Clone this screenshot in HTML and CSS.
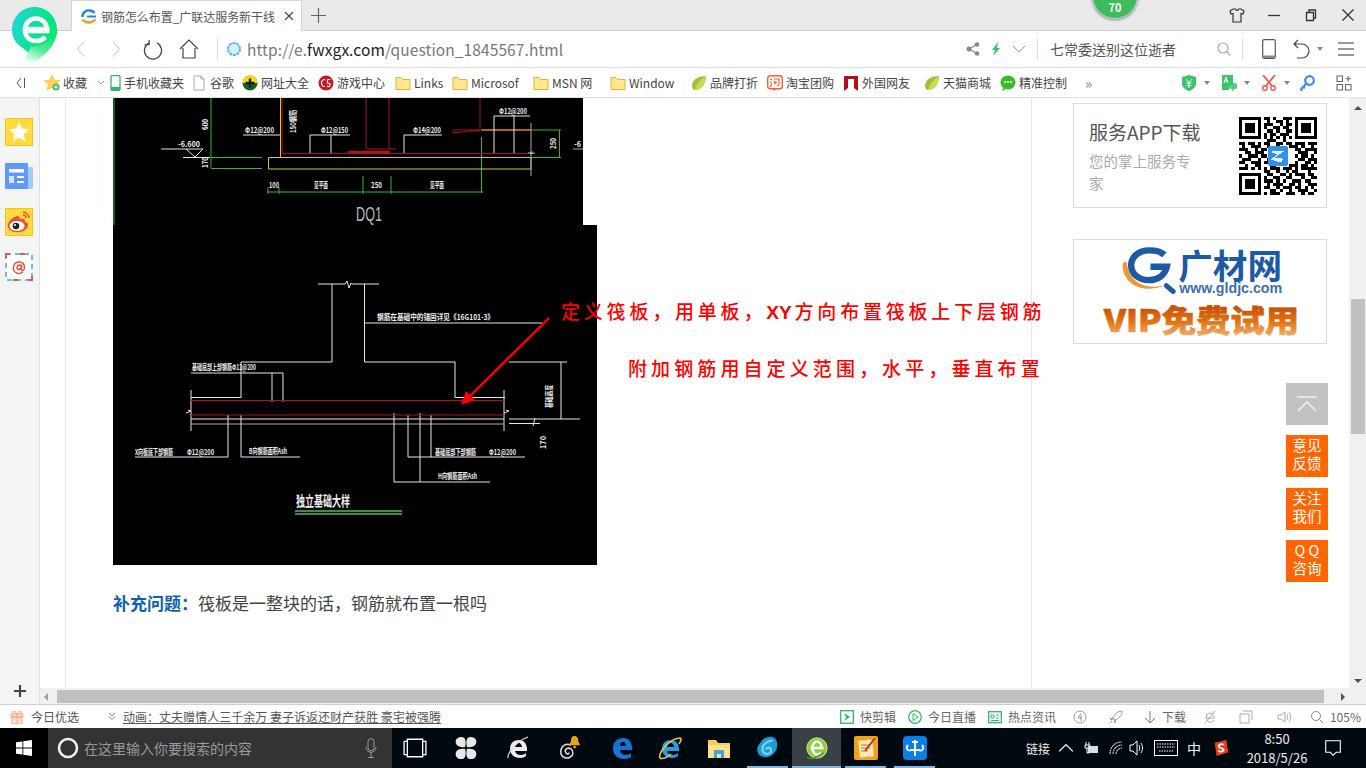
FILE: index.html
```html
<!DOCTYPE html>
<html lang="zh-CN">
<head>
<meta charset="utf-8">
<title>钢筋怎么布置_广联达服务新干线</title>
<link rel="stylesheet" href="styles.css">
</head>
<body>
<div class="browser">

  <!-- tab strip -->
  <header class="tabbar">
    <div class="tab">
      <svg class="ic16" viewBox="0 0 16 16"><path d="M1.500 9C1 4 6 2 9 2.500c2 .3 3.500 1 4.500 2.500" fill="none" stroke="#1c86d8" stroke-width="2.400"/><path d="M1.500 11.500c3 4 9 4 13 0" fill="none" stroke="#f39a1e" stroke-width="2.400"/><path d="M6 8.500h9" stroke="#1c86d8" stroke-width="2"/></svg>
      <span class="tab-title">钢筋怎么布置_广联达服务新干线</span>
      <svg class="tab-x" viewBox="0 0 10 10"><path d="M1 1l8 8M9 1L1 9" stroke="#444" stroke-width="1.200"/></svg>
    </div>
    <svg class="tab-plus" viewBox="0 0 15 15"><path d="M7.500 0v15M0 7.500h15" stroke="#666" stroke-width="1.200"/></svg>
    <div class="ball">70</div>
    <div class="winctl">
      <svg class="ic16" viewBox="0 0 16 16"><path d="M4 2h2.500c.5 2 2.500 2 3 0H12l3 2-1 3-2-.5V15H4V6.500L2 7 1 4z" fill="none" stroke="#333" stroke-width="1.200"/></svg>
      <svg class="ic16" viewBox="0 0 16 16"><path d="M2 8.500h12" stroke="#333" stroke-width="1.300"/></svg>
      <svg class="ic16" viewBox="0 0 16 16"><path d="M3.500 5.500h7v8h-7zM6 5V3h6.500v8H11" fill="none" stroke="#333" stroke-width="1.300"/></svg>
      <svg class="ic16" viewBox="0 0 16 16"><path d="M2.500 2.500l11 11M13.500 2.500l-11 11" stroke="#333" stroke-width="1.300"/></svg>
    </div>
  </header>

  <!-- browser logo, hangs over the tab strip and address bar -->
  <svg class="logo" viewBox="0 0 46 56">
    <defs>
      <linearGradient id="lg" x1="0" y1=".2" x2="1" y2=".6"><stop offset="0" stop-color="#25d6dd"/><stop offset=".5" stop-color="#0fdf9c"/><stop offset="1" stop-color="#00e96a"/></linearGradient>
      <linearGradient id="lg2" x1=".7" y1="0" x2=".2" y2="1"><stop offset="0" stop-color="#00e96a"/><stop offset=".55" stop-color="#4bee94"/><stop offset="1" stop-color="#ffffff"/></linearGradient>
      <linearGradient id="lgbar" x1="0" y1="0" x2="1" y2="0"><stop offset="0" stop-color="#e6fff7"/><stop offset=".6" stop-color="#ffffff"/></linearGradient>
    </defs>
    <path d="M22.500 0C10 0 0 10 0 22.500c0 8 4 14 10 18l7 5.500 6-2C36 44 45 34.500 45 22.500 45 10 35 0 22.500 0z" fill="url(#lg)"/>
    <path d="M45 22.500C45 38 33 49 20 56H9.500c4-6 7-12 10-16.500 10 0 20-6 25.500-17z" fill="url(#lg2)"/>
    <path d="M13 23c0-7 5-11.500 11-11.500S35 16 35 23M13 23c0 7 5 11 11 11 4 0 7-1.500 9.500-4" fill="none" stroke="#fff" stroke-width="4.600"/>
    <path d="M12 19.800h25.500v6.500H12z" fill="url(#lgbar)"/>
  </svg>

  <!-- address bar -->
  <nav class="addrbar">
    <div class="nav-left">
      <svg class="nav-ic w-back" viewBox="0 0 12 20"><path d="M10 1L2 10l8 9" fill="none" stroke="#ccc" stroke-width="1.300"/></svg>
      <svg class="nav-ic w-fwd" viewBox="0 0 12 20"><path d="M2 1l8 9-8 9" fill="none" stroke="#ccc" stroke-width="1.300"/></svg>
      <svg class="nav-ic w-ref" viewBox="0 0 20 22"><path d="M6 4a9 9 0 1 0 8 0M6 1v5H1" fill="none" stroke="#444" stroke-width="1.200"/></svg>
      <svg class="nav-ic w-home" viewBox="0 0 20 20"><path d="M1 10l9-9 9 9M4 9v10h12V9" fill="none" stroke="#444" stroke-width="1.200"/></svg>
    </div>
    <div class="url">
      <svg class="ic16" viewBox="0 0 16 16"><circle cx="8" cy="8" r="6" fill="#d5f0ff" stroke="#54b8ee" stroke-width="2" stroke-dasharray="3 .7"/></svg>
      <span class="url-text">http://e.<b>fwxgx.com</b>/question_1845567.html</span>
    </div>
    <div class="addr-actions">
      <svg class="ic14" viewBox="0 0 14 14"><path d="M3 7l8-4.500M3 7l8 4.500" stroke="#888" stroke-width="1.200"/><circle cx="3" cy="7" r="2.500" fill="#888"/><circle cx="11" cy="2.500" r="2.300" fill="#888"/><circle cx="11" cy="11.500" r="2.300" fill="#888"/></svg>
      <svg class="ic14" viewBox="0 0 14 14"><path d="M9 0L3 8h3l-2 6 7-8H8z" fill="#36c569"/></svg>
      <svg class="ic14" viewBox="0 0 14 14"><path d="M1 4l6 6 6-6" fill="none" stroke="#999" stroke-width="1"/></svg>
    </div>
    <div class="searchbox">
      <span class="search-text">七常委送别这位逝者</span>
      <svg class="ic14" viewBox="0 0 14 14"><circle cx="6" cy="6" r="5" fill="none" stroke="#aaa" stroke-width="1.200"/><path d="M10 10l3.500 3.500" stroke="#aaa" stroke-width="1.300"/></svg>
    </div>
    <div class="addr-tools">
      <svg class="tool-phone" viewBox="0 0 14 20"><rect x=".7" y=".7" width="12.600" height="18.600" rx="1.500" fill="none" stroke="#555" stroke-width="1.200"/><path d="M1 16.500h12v2.500H1z" fill="#888"/></svg>
      <svg class="tool-undo" viewBox="0 0 18 20"><path d="M5 1L1 5l4 4M1 5h8a6.500 6.500 0 0 1 0 14H4" fill="none" stroke="#444" stroke-width="1.200"/></svg>
      <span class="caret caret-g"></span>
      <svg class="tool-menu" viewBox="0 0 16 14"><path d="M0 1h16M0 7h16M0 13h16" stroke="#333" stroke-width="1.200"/></svg>
    </div>
  </nav>

  <!-- bookmarks -->
  <nav class="bookmarks">
    <svg class="bm-collapse" viewBox="0 0 10 12"><path d="M5 1L1 6l4 5" fill="none" stroke="#555"/><path d="M8.500 1v10" stroke="#555"/></svg>
    <div class="bm-list">
      <a class="bm"><svg class="ic16" viewBox="0 0 16 16"><path d="M8 0l2.300 5.200 5.500.6-4.100 3.700 1.200 5.500L8 12.200 3.100 15 4.300 9.500.2 5.800l5.500-.6z" fill="#ffd64d" stroke="#e8b93a" stroke-width=".6"/><circle cx="12" cy="12" r="3.500" fill="#4cb86a"/><path d="M12 10v4M10 12h4" stroke="#fff"/></svg>收藏<svg class="bm-chev" viewBox="0 0 8 6"><path d="M1 1l3 3 3-3" fill="none" stroke="#999"/></svg></a>
      <a class="bm bm-tight"><svg class="ic16" viewBox="0 0 16 16"><rect x="3" y=".7" width="9" height="14.600" rx="1" fill="none" stroke="#34b560" stroke-width="1.300"/><path d="M3 12h9v3H3z" fill="#34b560"/></svg>手机收藏夹</a>
      <a class="bm"><svg class="ic16" viewBox="0 0 16 16"><path d="M3 1h7l3 3v11H3z" fill="#fff" stroke="#aaa"/><path d="M10 1v3h3" fill="#ddd" stroke="#aaa"/></svg>谷歌</a>
      <a class="bm"><svg class="ic16" viewBox="0 0 16 16"><circle cx="8" cy="8" r="7.500" fill="#1d5c22"/><path d="M8 .5a7.500 7.500 0 0 1 7.500 7.500H.5A7.500 7.500 0 0 1 8 .5" fill="#ffd800"/><path d="M8 3.500v9M3.500 8h9" stroke="#123" stroke-width="2.400"/></svg>网址大全</a>
      <a class="bm"><svg class="ic16" viewBox="0 0 16 16"><circle cx="8" cy="8" r="7.500" fill="#c8171e"/><path d="M7 4.500A3.500 3.500 0 1 0 7 11.500M9.500 4.500h3M9.500 4.500V8c2 0 3 1 2.500 2.500S10 12 9 11" fill="none" stroke="#fff" stroke-width="1.200"/></svg>游戏中心</a>
      <a class="bm"><svg class="ic16" viewBox="0 0 16 16"><path d="M1 2.500h5l1.500 2H15v10H1z" fill="#ffe68f" stroke="#e2b23c"/></svg>Links</a>
      <a class="bm"><svg class="ic16" viewBox="0 0 16 16"><path d="M1 2.500h5l1.500 2H15v10H1z" fill="#ffe68f" stroke="#e2b23c"/></svg>Microsof</a>
      <a class="bm"><svg class="ic16" viewBox="0 0 16 16"><path d="M1 2.500h5l1.500 2H15v10H1z" fill="#ffe68f" stroke="#e2b23c"/></svg>MSN 网</a>
      <a class="bm"><svg class="ic16" viewBox="0 0 16 16"><path d="M1 2.500h5l1.500 2H15v10H1z" fill="#ffe68f" stroke="#e2b23c"/></svg>Window</a>
      <a class="bm"><svg class="ic16" viewBox="0 0 16 16"><path d="M15 1C8 1 1 4 1 11c0 2 1 4 3 4 7 0 11-7 11-14z" fill="#9ec23c"/><path d="M15 1C10 5 5 9 4 15c7 0 11-7 11-14z" fill="#c7dc55"/></svg>品牌打折</a>
      <a class="bm"><svg class="ic16" viewBox="0 0 16 16"><rect x=".7" y=".7" width="14.600" height="13" rx="2.500" fill="#fff" stroke="#f1632a" stroke-width="1.400"/><path d="M3 4l2 1M3 7l2 1M3 12l2-3M7 4h5v6l-2 1M9 6v3M7 6l1 3" fill="none" stroke="#f1632a" stroke-width="1.200"/><path d="M5 14l3 2v-2z" fill="#f1632a"/></svg>淘宝团购</a>
      <a class="bm"><svg class="ic16" viewBox="0 0 16 16"><path d="M1 1h14v15l-4-3V4H5v9l-4 3z" fill="#b31019"/></svg>外国网友</a>
      <a class="bm"><svg class="ic16" viewBox="0 0 16 16"><path d="M15 1C8 1 1 4 1 11c0 2 1 4 3 4 7 0 11-7 11-14z" fill="#9ec23c"/><path d="M15 1C10 5 5 9 4 15c7 0 11-7 11-14z" fill="#c7dc55"/></svg>天猫商城</a>
      <a class="bm"><svg class="ic16" viewBox="0 0 16 16"><ellipse cx="8" cy="7.500" rx="7.500" ry="7" fill="#3eb82c"/><path d="M3 13l-1 3 4-2z" fill="#3eb82c"/><circle cx="5" cy="7" r="1" fill="#fff"/><circle cx="8" cy="7" r="1" fill="#fff"/><circle cx="11" cy="7" r="1" fill="#fff"/></svg>精准控制</a>
    </div>
    <span class="bm-more">»</span>
    <div class="bm-tools">
      <svg class="ic16" viewBox="0 0 16 16"><path d="M8 0l7 2v7c0 3-3 5.500-7 7-4-1.500-7-4-7-7V2z" fill="#3cc46a"/><path d="M5 4l3 3.500L11 4M8 7.500V13M5.500 8h5M5.500 10.500h5" fill="none" stroke="#fff"/></svg>
      <span class="caret"></span>
      <svg class="ic16" viewBox="0 0 16 16"><path d="M1 0h11v10H8v5H1z" fill="#3cc46a"/><path d="M3 8l2-6 2 6M4 6h2" fill="none" stroke="#fff"/><path d="M8 11h8M12 8v8M9 9h6v4H9z" fill="none" stroke="#3cc46a" stroke-width="1.300"/></svg>
      <span class="caret"></span>
      <svg class="ic16" viewBox="0 0 16 16"><path d="M2 0l9 11M14 0L5 11" stroke="#f25454" stroke-width="1.800"/><circle cx="4" cy="13" r="2.300" fill="none" stroke="#f25454" stroke-width="1.400"/><circle cx="12" cy="13" r="2.300" fill="none" stroke="#f25454" stroke-width="1.400"/></svg>
      <span class="caret caret-last"></span>
      <svg class="ic16" viewBox="0 0 16 16"><circle cx="10.500" cy="5.500" r="4.300" fill="none" stroke="#3d8af0" stroke-width="2.200"/><path d="M7.500 8.500L1.500 14.500M1.500 14.500l2 1M4 12l2 1" stroke="#3d8af0" stroke-width="2"/></svg>
      <svg class="ic16 tool-grid" viewBox="0 0 16 16"><path d="M1 1h5.500v5.500H1zM1 9.500h5.500V15H1zM9.500 9.500H15V15H9.500zM12.200 1v5.500M9.500 3.700H15" fill="none" stroke="#666" stroke-width="1.100"/></svg>
    </div>
  </nav>

  <!-- work area -->
  <div class="work">
    <aside class="sidebar">
      <div class="side-icons">
        <svg class="side-ic" viewBox="0 0 28 28"><rect x=".5" y=".5" width="27" height="27" fill="#ffdb3d" stroke="#f8c21f"/><path d="M14 4l3 6.600 7 .8-5.200 4.800 1.400 7L14 19.600 7.800 23.200l1.400-7L4 11.400l7-.8z" fill="#fff"/></svg>
        <svg class="side-ic" viewBox="0 0 28 28"><rect x="22" y="4" width="6" height="22" rx="1" fill="#a7c9fb"/><rect width="23" height="26" y="0" rx="1" fill="#5f9bf6"/><path d="M4 6h15v3.500H4z" fill="#fff"/><path d="M4 13h5v7H4z" fill="#d7e7ff"/><path d="M12 13h7v2h-7zM12 18h7v2h-7z" fill="#fff"/></svg>
        <svg class="side-ic" viewBox="0 0 28 28"><rect x=".5" y=".5" width="27" height="27" fill="#ffdb3d" stroke="#f8c21f"/><path d="M12 8C6 10 2 15 3 19c1 4 7 6 12 5s8-4 8-7c0-2-2-3-3-3 1-3-2-4-5-3 0-2-1-3-3-3z" fill="#ec4f3a"/><ellipse cx="12" cy="18" rx="7.500" ry="5" fill="#fff"/><circle cx="11" cy="18" r="3.300" fill="#222"/><circle cx="10" cy="17" r="1" fill="#fff"/><path d="M18 4c3 0 6 3 6 6M18 7c2 0 3 1 3 3" fill="none" stroke="#ec4f3a" stroke-width="1.400"/></svg>
        <svg class="side-ic" viewBox="0 0 28 28"><rect x="1" y="1" width="26" height="26" fill="#fff" stroke="#6fb8f5" stroke-width="2" stroke-dasharray="5 4"/><path d="M1 5V1h4M15 1h5M27 23v4h-4M8 27h5" fill="none" stroke="#ec5a46" stroke-width="2"/><path d="M18 19c-2 1.500-4 2-6 1.300C9 19 8 16 8.500 13.500 9 10.500 12 8.500 15 9c3 .5 4.500 3 4.500 5.500 0 1.500-1 3-2 3s-1.500-1-1.300-2l.5-4M15.800 13c-1-1.500-3.500-1-3.800 1.500-.2 2 2.500 3 3.500.5" fill="none" stroke="#e8503c" stroke-width="1.500"/></svg>
      </div>
      <svg class="side-plus" viewBox="0 0 12 12"><path d="M6 0v12M0 6h12" stroke="#444" stroke-width="2.200"/></svg>
    </aside>

    <main class="viewport">
      <div class="gutter"></div>
      <section class="article">
        <svg class="cad cad-top" viewBox="113 98 470 127">
          <rect x="113" y="98" width="470" height="127"/>
          <g class="g">
            <path d="M114 98v127M211 98v70M211 157.500h51M211 168.500h51"/>
            <path d="M481.500 137v56M267 192h216M268 187v7M279 187v7M363 176v18M391 176v18M531 130h30M531 157.500h30M559.500 130v28"/>
          </g>
          <path class="y" d="M268.500 157.500h262.500v11.500H268.500zM280.500 98v59.500"/>
          <path class="o" d="M481 130h50"/>
          <g class="r">
            <path d="M282 98v55M282 153.500h248M366 98v51M389 98v51M366 149h30M452 130h28l-28 3M480 98v32"/>
            <path class="r3" d="M348 152h42"/>
          </g>
          <g class="w">
            <path d="M161 149h42M186 149l9 8 8-8M183 157.500h27"/>
            <path d="M243 135h37M310 135h40M310 135v18M331 135v18M404 135h38M404 135v18M494 116h36M494 116v37M514 116v37"/>
            <path class="gr" d="M531 123v53M573 149h10M528 153l5-1-3 2 5-1"/>
          </g>
          <text class="t" x="245" y="133" textLength="29" lengthAdjust="spacingAndGlyphs">Φ12@200</text>
          <text class="t" x="321" y="133" textLength="27" lengthAdjust="spacingAndGlyphs">Φ12@150</text>
          <text class="t" x="413" y="133" textLength="28" lengthAdjust="spacingAndGlyphs">Φ14@200</text>
          <text class="t" x="499" y="114" textLength="28" lengthAdjust="spacingAndGlyphs">Φ12@200</text>
          <text class="t" x="178" y="147" textLength="22" lengthAdjust="spacingAndGlyphs">-6.600</text>
          <text class="t" x="574" y="147" textLength="7" lengthAdjust="spacingAndGlyphs">-6</text>
          <text class="t" x="269" y="188" textLength="10" lengthAdjust="spacingAndGlyphs">100</text>
          <text class="t" x="314" y="188" textLength="14" lengthAdjust="spacingAndGlyphs">见平面</text>
          <text class="t" x="371" y="188" textLength="11" lengthAdjust="spacingAndGlyphs">250</text>
          <text class="t" x="430" y="188" textLength="14" lengthAdjust="spacingAndGlyphs">见平面</text>
          <text class="t" transform="rotate(-90 208 130)" x="208" y="130" textLength="11" lengthAdjust="spacingAndGlyphs">600</text>
          <text class="t" transform="rotate(-90 208 168)" x="208" y="168" textLength="11" lengthAdjust="spacingAndGlyphs">170</text>
          <text class="t" transform="rotate(-90 296 133)" x="296" y="133" textLength="23" lengthAdjust="spacingAndGlyphs">150钢筋</text>
          <text class="t" transform="rotate(-90 556 149)" x="556" y="149" textLength="11" lengthAdjust="spacingAndGlyphs">250</text>
          <text class="dq" x="356" y="221" textLength="26" lengthAdjust="spacingAndGlyphs">DQ1</text>
        </svg>

        <svg class="cad cad-bottom" viewBox="113 225 484 340">
          <rect x="113" y="225" width="484" height="340"/>
          <g class="w">
            <path d="M318 284h27l2-3 2 7 2-5 1 1h27M332 284v78M364.500 284v78M241 362h91M364.500 362H455M241 362v35.500M455 362v35.500M191 397.500h50M455 397.500h50"/>
            <path d="M364.500 323H542"/>
            <path d="M191 390v41M504 390v41M186 413l5-2-3-1M504 413l5-2-3-1M191 419h313"/>
            <path class="gr" d="M191 424h313"/>
            <path d="M191 373h92M272 373v29M283 373v29"/>
            <path d="M509 362h58M509 419h71M561 362v57M509 423.500h31M535 418l-2 8"/>
            <path d="M135 457h93M228 415v42M241 415v42M241 457h59M394 413v69M408 415v42M420 413v69M431 415v42M408 457h117M394 482h96"/>
          </g>
          <path class="r" d="M191 400.500h313M191 415h313"/>
          <path class="gl" d="M295 511h107M295 514h107"/>
          <text class="t" x="377" y="320" textLength="117" lengthAdjust="spacingAndGlyphs">钢筋在基础中的锚固详见《16G101-3》</text>
          <text class="t" x="192" y="370" textLength="64" lengthAdjust="spacingAndGlyphs">基础底部上部钢筋Φ12@200</text>
          <text class="t" x="135" y="455" textLength="38" lengthAdjust="spacingAndGlyphs">X向板底下部钢筋</text>
          <text class="t" x="187" y="455" textLength="27" lengthAdjust="spacingAndGlyphs">Φ12@200</text>
          <text class="t" x="249" y="454" textLength="38" lengthAdjust="spacingAndGlyphs">B向钢筋面积Ash</text>
          <text class="t" x="435" y="455" textLength="41" lengthAdjust="spacingAndGlyphs">基础底部下部钢筋</text>
          <text class="t" x="489" y="455" textLength="27" lengthAdjust="spacingAndGlyphs">Φ12@200</text>
          <text class="t" x="438" y="479" textLength="39" lengthAdjust="spacingAndGlyphs">H向钢筋面积Ash</text>
          <text class="t" transform="rotate(-90 552 408)" x="552" y="408" textLength="23" lengthAdjust="spacingAndGlyphs">基础高度</text>
          <text class="t" transform="rotate(-90 546 449)" x="546" y="449" textLength="13" lengthAdjust="spacingAndGlyphs">170</text>
          <text class="cad-title" x="296" y="506" textLength="54" lengthAdjust="spacingAndGlyphs">独立基础大样</text>
        </svg>

        <p class="supp"><b>补充问题：</b>筏板是一整块的话，钢筋就布置一根吗</p>

        <svg class="arrow" viewBox="0 0 90 90"><path d="M88 1L6 82" stroke="#f00" stroke-width="2.400"/><path d="M0 88l5-14 9 9z" fill="#f00"/></svg>
        <p class="note note-1">定义筏板，用单板，<b class="note-xy">XY</b>方向布置筏板上下层钢筋</p>
        <p class="note note-2">附加钢筋用自定义范围，水平，垂直布置</p>
      </section>

      <aside class="rail">
        <div class="card card-app">
          <div class="app-text">
            <h3 class="app-title">服务APP下载</h3>
            <p class="app-sub">您的掌上服务专家</p>
          </div>
          <svg class="qr" viewBox="0 0 25 25">
            <path fill-rule="evenodd" d="M0 0h7v7H0zM1 1v5h5V1zM2 2h3v3H2zM18 0h7v7h-7zM19 1v5h5V1zM20 2h3v3h-3zM0 18h7v7H0zM1 19v5h5v-5zM2 20h3v3H2z"/>
            <path class="qr-d" d="M8 .5h2M11 .5h1M14 .5h3M9 1.500h1M12 1.500h2M15 1.500h1M8 2.500h3M13 2.500h1M15 2.500h2M8 3.500h1M11 3.500h2M14 3.500h2M9 4.500h2M12 4.500h1M15 4.500h2M8 5.500h1M10 5.500h2M13 5.500h3M8 6.500h1M10 6.500h1M12 6.500h1M14 6.500h1M16 6.500h1M9 7.500h3M14 7.500h1M0 8.500h2M3 8.500h2M6 8.500h1M8 8.500h2M12 8.500h2M15 8.500h2M18 8.500h3M22 8.500h3M1 9.500h1M4 9.500h3M9 9.500h1M12 9.500h1M16 9.500h3M20 9.500h1M23 9.500h1M0 10.500h3M5 10.500h1M7 10.500h2M10 10.500h2M18 10.500h2M21 10.500h4M2 11.500h2M5 11.500h3M10 11.500h1M19 11.500h3M24 11.500h1M0 12.500h1M3 12.500h3M7 12.500h2M11 12.500h1M18 12.500h1M20 12.500h2M23 12.500h1M1 13.500h3M6 13.500h1M9 13.500h2M19 13.500h2M22 13.500h3M0 14.500h2M4 14.500h3M8 14.500h3M18 14.500h1M21 14.500h2M24 14.500h1M2 15.500h1M5 15.500h2M10 15.500h2M16 15.500h3M20 15.500h2M23 15.500h1M0 16.500h3M4 16.500h1M6 16.500h1M8 16.500h1M10 16.500h3M14 16.500h3M18 16.500h1M20 16.500h5M8 17.500h2M12 17.500h1M15 17.500h1M17 17.500h2M22 17.500h1M9 18.500h2M13 18.500h2M16 18.500h1M18 18.500h3M22 18.500h2M8 19.500h1M11 19.500h2M15 19.500h2M20 19.500h1M23 19.500h2M8 20.500h3M12 20.500h1M14 20.500h1M17 20.500h3M21 20.500h2M9 21.500h1M11 21.500h3M16 21.500h2M19 21.500h1M22 21.500h3M8 22.500h2M12 22.500h1M14 22.500h3M18 22.500h2M21 22.500h1M23 22.500h1M10 23.500h2M13 23.500h1M16 23.500h1M19 23.500h3M24 23.500h1M8 24.500h1M10 24.500h3M15 24.500h3M20 24.500h1M22 24.500h2"/>
            <rect x="9.200" y="9.200" width="6.600" height="6.600" rx="1.200" fill="#2f91ee"/>
            <path d="M10.600 11h3.800l-2.800 2 2.800.4-1 1.200-3.200-1 2.400-1.800-2-.2z" fill="#e8f3ff"/>
          </svg>
        </div>
        <div class="card card-ad">
          <svg class="ad" viewBox="0 0 252 104">
            <defs>
              <linearGradient id="vip" x1="0" y1="0" x2="0" y2="1"><stop offset="0" stop-color="#b03a00"/><stop offset=".55" stop-color="#e0700f"/><stop offset="1" stop-color="#f6c48a"/></linearGradient>
            </defs>
            <path d="M48 23C46 42 66 56 90 46 72 50 54 44 52 22z" fill="#ec9a35"/>
            <path d="M90 15C86 11 80 10.500 74.500 10.500 64 10.500 56.500 17 56.500 25.500s7.500 15 18 15c9 0 16-5 18-13.500H76" fill="none" stroke="#1d5aa6" stroke-width="6.500"/>
            <path d="M92 46l7 6" stroke="#1d5aa6" stroke-width="5" stroke-linecap="round"/>
            <text class="ad-name" x="104" y="39" textLength="105" lengthAdjust="spacingAndGlyphs">广材网</text>
            <text class="ad-url" x="105" y="54" textLength="104" lengthAdjust="spacingAndGlyphs">www.gldjc.com</text>
            <text class="ad-vip" x="29" y="93" textLength="197" lengthAdjust="spacingAndGlyphs" fill="url(#vip)" stroke="url(#vip)">VIP免费试用</text>
          </svg>
        </div>
      </aside>

      <div class="float">
        <a class="float-top"><svg viewBox="0 0 24 16"><path d="M2 1h20M3 15l9-9 9 9" fill="none" stroke="#eee" stroke-width="1.600"/></svg></a>
        <a class="float-btn">意见<br>反馈</a>
        <a class="float-btn">关注<br>我们</a>
        <a class="float-btn">Q Q<br>咨询</a>
      </div>
    </main>

    <div class="vscroll">
      <span class="arr-up"></span>
      <span class="vthumb"></span>
      <span class="arr-down"></span>
    </div>

    <div class="hscroll">
      <span class="arr-left"></span>
      <span class="hthumb"></span>
      <span class="arr-right"></span>
    </div>
    <div class="corner"></div>
  </div>

  <!-- status bar -->
  <footer class="status">
    <div class="st-left">
      <svg class="ic14" viewBox="0 0 14 14"><path d="M1 4h12v3H1zM2 7h10v7H2zM7 4v10M7 4C5 0 2 1 3 4M7 4c2-4 5-3 4 0" fill="#fde3d5" stroke="#f3a57f"/></svg>
      <span class="st-today">今日优选</span>
      <svg class="st-chev" viewBox="0 0 8 9"><path d="M1 1l3 3 3-3M1 4.500l3 3 3-3" fill="none" stroke="#777" stroke-width=".9"/></svg>
      <a class="st-news">动画：丈夫赠情人三千余万 妻子诉返还财产获胜 豪宅被强腾</a>
    </div>
    <div class="st-right">
      <span class="st-item"><svg class="ic14" viewBox="0 0 14 14"><rect x=".7" y=".7" width="12.600" height="12.600" fill="none" stroke="#35b566" stroke-width="1.300"/><path d="M4 3l6 4-6 4 2-4z" fill="#35b566"/></svg>快剪辑</span>
      <span class="st-item"><svg class="ic14" viewBox="0 0 14 14"><circle cx="7" cy="7" r="6.300" fill="none" stroke="#35b566" stroke-width="1.300"/><path d="M5 3.500v7l5-3.500z" fill="none" stroke="#35b566"/></svg>今日直播</span>
      <span class="st-item st-hot"><svg class="ic14" viewBox="0 0 14 14"><rect x=".7" y="1.700" width="12.600" height="11" fill="none" stroke="#35b566" stroke-width="1.300"/><path d="M3 5h3v3H3zM8 5h3M8 8h3M3 10.500h8" fill="none" stroke="#35b566"/></svg>热点资讯</span>
      <svg class="ic14 st-ic1" viewBox="0 0 14 14"><circle cx="7" cy="7" r="6" fill="none" stroke="#999"/><path d="M8 3L5 8h4M8 5v6" fill="none" stroke="#999"/></svg>
      <svg class="ic14 st-ic2" viewBox="0 0 14 14"><path d="M13 1C8 1 5 5 4 8l2 2c3-1 7-4 7-9zM4 8l-3 1 2 1zM6 10l-1 3 2-2zM3 11l-2 2" fill="none" stroke="#999"/></svg>
      <span class="st-item st-dl"><svg class="ic14" viewBox="0 0 14 14"><path d="M7 1v12M2 8l5 5 5-5" fill="none" stroke="#777"/></svg>下载</span>
      <svg class="ic14 st-ic3" viewBox="0 0 14 14"><path d="M12 8H3c0-3 2-5 4-5s4 2 4 4M11 10c-1 2-3 3-5 2-3-1-3-5-2-8M2 13c3-3 8-10 10-12" fill="none" stroke="#aaa"/></svg>
      <svg class="ic14 st-ic4" viewBox="0 0 14 14"><path d="M4 1h9v9M1 4h9v9H1z" fill="none" stroke="#aaa"/></svg>
      <svg class="ic14 st-ic5" viewBox="0 0 14 14"><path d="M1 5h3l4-3v10L4 9H1zM10 4c1 2 1 4 0 6M12 2c2 3 2 7 0 10" fill="none" stroke="#aaa"/></svg>
      <svg class="ic14 st-ic6" viewBox="0 0 14 14"><circle cx="6" cy="6" r="4.500" fill="none" stroke="#888"/><path d="M9.500 9.500l3.500 3.500" stroke="#888"/></svg>
      <span class="st-zoom">105%</span>
    </div>
  </footer>

  <!-- taskbar -->
  <div class="taskbar">
    <div class="start"><svg class="win" viewBox="0 0 16 16"><path d="M0 2.300L6.500 1.400v6.200H0zM7.300 1.300L16 0v7.600H7.300zM0 8.400h6.500v6.200L0 13.700zM7.300 8.400H16V16l-8.700-1.300z" fill="#fff"/></svg></div>
    <div class="ts-box">
      <svg class="cortana" viewBox="0 0 22 22"><circle cx="11" cy="11" r="9" fill="none" stroke="#eee" stroke-width="2.600"/></svg>
      <span class="ts-text">在这里输入你要搜索的内容</span>
      <svg class="mic" viewBox="0 0 12 20"><rect x="3" y=".7" width="6" height="12" rx="3" fill="none" stroke="#999"/><path d="M1 9c0 7 10 7 10 0M6 14v5M3 19.500h6" fill="none" stroke="#999"/></svg>
    </div>
    <div class="ts-apps">
      <span class="app"><svg class="app-ic" viewBox="0 0 22 18"><path d="M4 1h14v16H4zM4 3H1v12h3M18 3h3v12h-3" fill="none" stroke="#fff" stroke-width="1.200"/></svg></span>
      <span class="app"><svg class="app-ic" viewBox="0 0 24 26"><g fill="#e8e8e8"><path d="M11 12C3 13 0 9 1 5s6-5 9-3c2 2 2 6 1 10z"/><path d="M13 12c8 1 11-3 10-7s-6-5-9-3c-2 2-2 6-1 10z"/><path d="M11 14c-8-1-11 3-10 7s6 5 9 3c2-2 2-6 1-10z"/><path d="M13 14c8-1 11 3 10 7s-6 5-9 3c-2-2-2-6-1-10z"/></g></svg></span>
      <span class="app"><svg class="app-ic" viewBox="0 0 24 24"><path d="M4 13C4 7 8 4 13 4s8 4 8 9v2H9c1 3 3 4 6 4 2 0 4-1 5-2v3c-2 1-3 2-6 2-6 0-10-4-10-9zM9 11h7c0-2-2-4-3-4-2 0-4 2-4 4z" fill="#eee"/><path d="M2 22C1 18 10 5 22 1" fill="none" stroke="#ddd" stroke-width="1.200"/></svg></span>
      <span class="app app-bell"><svg class="app-ic" viewBox="0 0 24 26"><path d="M13 10c-5-3-11 1-11 7s6 8 10 6 4-7 1-9-7 0-6 3 4 3 4 1" fill="none" stroke="#ddd" stroke-width="1.700"/><path d="M17 0c3 0 4 3 4 6l2 4H11l2-4c0-3 1-6 4-6z" fill="#e8a50e"/><circle cx="17" cy="12" r="1.500" fill="#e8a50e"/></svg></span>
      <span class="app app-edge"><svg class="app-ic" viewBox="0 0 24 24"><path d="M3 13C3 6 7 2 13 2c6 0 9 5 9 10v2H10c0 3 3 5 6 5 2 0 4-1 5-2v4c-2 1-4 2-7 2-6 0-11-4-11-10zM10 10h6c0-2-1-4-3-4s-3 2-3 4z" fill="#1574d4"/></svg></span>
      <span class="app"><svg class="app-ic" viewBox="0 0 24 24"><path d="M4 13C4 7 8 4 13 4s8 4 8 9v2H9c1 3 3 4 6 4 2 0 4-1 5-2v3c-2 1-3 2-6 2-6 0-10-4-10-9zM9 11h7c0-2-2-4-3-4-2 0-4 2-4 4z" fill="#2a9ae8"/><path d="M2 22C0 18 10 3 22 2c2 0 1 3-1 6M2 22c3 2 9-2 11-4" fill="none" stroke="#f2c230" stroke-width="1.600"/></svg></span>
      <span class="app"><svg class="app-ic" viewBox="0 0 24 22"><path d="M1 3h8l2 3h12v15H1z" fill="#f6cf5a"/><path d="M1 8h22v13H1z" fill="#fde28a"/><path d="M7 13h10v8h-3v-4h-4v4H7z" fill="#3fa4df"/></svg></span>
      <span class="app app-on"><svg class="app-ic" viewBox="0 0 26 26"><path d="M7 4C14-1 22 0 23 8c1 8-6 16-14 15-7-1-9-7-7-12" fill="#1b9ad8"/><path d="M18 5c-6 0-11 4-11 9s4 6 7 5 3-5 1-6-4 0-4 2" fill="none" stroke="#7fd2f7" stroke-width="2.400"/></svg></span>
      <span class="app app-cur"><svg class="app-ic" viewBox="0 0 24 26"><circle cx="12" cy="13" r="11" fill="#8fce3e" stroke="#cde9a0"/><path d="M5 13h14M7 13c0-5 3-7 5-7s5 2 5 7M7 13c0 5 3 7 5 7 2 0 4-1 5-2" fill="none" stroke="#fff" stroke-width="2.600"/><path d="M1 23c5 3 12 0 18-5" fill="none" stroke="#3c9c2c" stroke-width="1.500"/></svg></span>
      <span class="app app-on"><svg class="app-ic" viewBox="0 0 24 24"><rect width="24" height="24" rx="2" fill="#f0a21e"/><path d="M5 4h14v17H5z" fill="#fbe6b8" transform="rotate(-6 12 12)"/><path d="M7 9h9M7 12h9M7 15h7" stroke="#a7843e"/><path d="M21 2L11 15" stroke="#b8341e" stroke-width="2"/></svg></span>
      <span class="app app-on"><svg class="app-ic" viewBox="0 0 24 24"><rect width="24" height="24" rx="4" fill="#0a7ee6"/><path d="M12 4v16M5 9c-3 3 0 7 3 5h8c3 2 6-2 3-5M9 6h6" fill="none" stroke="#fff" stroke-width="1.800"/></svg></span>
    </div>
    <div class="tray">
      <span class="tray-link">链接</span>
      <svg class="tray-ic" viewBox="0 0 14 8"><path d="M1 7l6-6 6 6" fill="none" stroke="#fff" stroke-width="1.100"/></svg>
      <svg class="tray-ic" viewBox="0 0 16 14"><path d="M3 1v3M6 1v3M2 4h5v3H2zM4 7v5h2" fill="none" stroke="#fff"/><rect x="5" y="5" width="10" height="7" fill="#ddd"/></svg>
      <svg class="tray-ic tray-wifi" viewBox="0 0 16 16"><path d="M2 14c0-7 5-12 12-12M5 14c0-5 4-9 9-9M8 14c0-3 3-6 6-6" fill="none" stroke="#ccc" stroke-width="1.100" stroke-dasharray="2 .6"/></svg>
      <svg class="tray-ic" viewBox="0 0 16 16"><path d="M1 5h3l4-4v14l-4-4H1zM10 5c1 2 1 4 0 6M12 3c2 3 2 7 0 10" fill="none" stroke="#fff"/></svg>
      <svg class="tray-kb" viewBox="0 0 24 16"><rect x=".5" y=".5" width="23" height="15" fill="none" stroke="#fff"/><path d="M3 4h18M3 7h18M5 11h14" stroke="#fff" stroke-dasharray="1.500 1"/></svg>
      <span class="tray-ime">中</span>
      <svg class="tray-ic" viewBox="0 0 16 18"><path d="M1 3l13-3 2 14-13 4z" fill="#ee3d1e"/><path d="M11 5.500C9 4 5 5 5.500 7.500S11 9 11 11s-4 3-6 1" fill="none" stroke="#fff" stroke-width="2"/></svg>
      <div class="clock"><span>8:50</span><span>2018/5/26</span></div>
      <svg class="tray-note" viewBox="0 0 16 16"><path d="M.7.7h14.600v11.600h-4L8 15.300l-2.500-3H.7z" fill="none" stroke="#fff" stroke-width="1.100"/></svg>
    </div>
  </div>
</div>
</body>
</html>
```

FILE: styles.css
```css
* { box-sizing: border-box; }
html, body { margin: 0; padding: 0; }
body {
  font-family: "Noto Sans CJK SC", "Noto Sans", sans-serif;
  color: #444;
  background: #fff;
  overflow: hidden;
}
p, h3 { margin: 0; font-weight: 400; }
a { color: inherit; text-decoration: none; }
svg { display: block; flex: none; }
.ic16 { width: 16px; height: 16px; }
.ic14 { width: 14px; height: 14px; }

.browser {
  position: relative;
  width: 1366px;
  height: 768px;
  display: flex;
  flex-direction: column;
  overflow: hidden;
}

/* tab strip */
.tabbar {
  position: relative;
  height: 31px;
  flex: none;
  display: flex;
  align-items: flex-end;
  padding-left: 71px;
  background: #eaeaea;
  border-bottom: 1px solid #cfcfcf;
}
.tab {
  width: 231px;
  height: 31px;
  margin-bottom: -1px;
  padding: 0 9px 0 9px;
  display: flex;
  align-items: center;
  gap: 4px;
  background: #fff;
  border: 1px solid #d4d4d4;
  border-bottom: 0;
}
.tab-title { font-size: 12px; color: #555; white-space: nowrap; width: 175px; letter-spacing: -.05px; }
.tab-x { width: 10px; height: 10px; margin-left: 5px; }
.tab-plus { width: 15px; height: 15px; margin: 0 0 7px 9px; }
.ball {
  position: absolute;
  left: 1092px;
  top: -27px;
  width: 46px;
  height: 46px;
  border-radius: 50%;
  background: #3dbb5d;
  border: 1px solid #cfd8d0;
  box-shadow: 0 1px 3px rgba(0, 0, 0, .45);
  color: #fff;
  font-size: 11px;
  font-weight: 700;
  text-align: center;
  padding-top: 27px;
  line-height: 13px;
}
.winctl {
  margin-left: auto;
  display: flex;
  gap: 21px;
  padding: 0 10px 7px 0;
}

.logo {
  position: absolute;
  left: 12px;
  top: 7px;
  width: 46px;
  height: 56px;
  z-index: 2;
}

/* address bar */
.addrbar {
  height: 37px;
  flex: none;
  display: flex;
  align-items: center;
  background: #fff;
  border-bottom: 1px solid #dcdcdc;
}
.nav-left {
  width: 217px;
  height: 100%;
  display: flex;
  align-items: center;
  padding-left: 76px;
}
.nav-ic { height: 20px; }
.w-back { width: 10px; }
.w-fwd { width: 10px; margin-left: 25px; }
.w-ref { width: 20px; height: 21px; margin-left: 22px; }
.w-home { width: 20px; margin-left: 16px; }
.url {
  width: 749px;
  height: 22px;
  display: flex;
  align-items: center;
  gap: 5px;
  padding-left: 8px;
  border-left: 1px solid #dcdcdc;
}
.url-text { font-size: 15.500px; color: #777; white-space: nowrap; letter-spacing: .1px; }
.url-text b { font-weight: 400; color: #222; }
.addr-actions {
  width: 71px;
  height: 22px;
  display: flex;
  align-items: center;
  gap: 9px;
}
.searchbox {
  width: 206px;
  height: 22px;
  display: flex;
  align-items: center;
  padding-left: 12px;
  border-left: 1px solid #dcdcdc;
  border-right: 1px solid #dcdcdc;
}
.search-text { font-size: 14px; color: #555; width: 167px; white-space: nowrap; }
.addr-tools { flex: 1; display: flex; align-items: center; padding-left: 19px; }
.tool-phone { width: 14px; height: 20px; }
.tool-undo { width: 18px; height: 20px; margin-left: 17px; }
.caret { width: 0; height: 0; border: 3px solid transparent; border-top: 4px solid #888; border-bottom: 0; flex: none; }
.caret-g { margin-left: 6px; }
.tool-menu { width: 16px; height: 14px; margin-left: 15px; }

/* bookmarks */
.bookmarks {
  height: 30px;
  flex: none;
  display: flex;
  align-items: center;
  padding-left: 16px;
  background: #fff;
  border-bottom: 1px solid #e2e2e2;
  font-size: 12px;
  color: #444;
}
.bm-collapse { width: 10px; height: 12px; }
.bm-list {
  margin-left: 18px;
  width: 1030px;
  display: grid;
  grid-template-columns: 64px 83px 51px 76px 77px 57px 81px 77px 81px 76px 76px 81px 76px 70px;
}
.bm { display: flex; align-items: center; gap: 3px; white-space: nowrap; }
.bm-tight { gap: 0; }
.bm-chev { width: 8px; height: 6px; margin-left: 7px; }
.bm-more { margin-left: 11px; font-size: 15px; color: #888; width: 34px; }
.bm-tools { display: flex; align-items: center; margin-left: 62px; }
.bm-tools .caret { margin: 0 11px 0 7px; }
.bm-tools .caret-last { margin-right: 9px; }
.tool-grid { margin-left: 21px; }

/* work area */
.work {
  flex: 1;
  display: grid;
  grid-template-columns: 40px 1fr 17px;
  grid-template-rows: 590px 16px;
  min-height: 0;
}
.sidebar {
  grid-row: 1 / span 2;
  background: #f3f5f5;
  border-right: 1px solid #e0e0e0;
  display: flex;
  flex-direction: column;
  justify-content: space-between;
  padding: 20px 0 7px 5px;
}
.side-icons { display: flex; flex-direction: column; gap: 17px; }
.side-ic { width: 28px; height: 28px; }
.side-plus { width: 12px; height: 12px; margin-left: 9px; }

.viewport {
  position: relative;
  display: flex;
  overflow: hidden;
  background: #fff;
}
.gutter { width: 25px; flex: none; }
.article {
  position: relative;
  width: 967px;
  flex: none;
  padding-left: 47px;
  border-left: 1px solid #e8e8e8;
  border-right: 1px solid #e8e8e8;
}
.cad { display: block; }
.cad-top { width: 470px; height: 127px; }
.cad-bottom { width: 484px; height: 340px; }
.cad rect { fill: #000; }
.cad path { fill: none; stroke-width: 1; }
.cad .g path { stroke: #35b53a; }
.cad .y { stroke: #d6c54e; }
.cad .o { stroke: #e08a1c; stroke-width: 1.500; }
.cad .r path, .cad path.r { stroke: #b01020; }
.cad .r .r3 { stroke-width: 2.500; }
.cad .w path { stroke: #e6e6e6; }
.cad .w .gr { stroke: #aaa; }
.cad .gl { stroke: #3b8f40; stroke-width: 2; }
.cad text { fill: #eee; }
.t { font-size: 8px; font-weight: 700; }
.dq { font-size: 20px; font-family: "Liberation Sans", sans-serif; font-weight: 400; }
.cad .dq { fill: #bbb; }
.cad-title { font-size: 14px; font-weight: 700; }
.supp { margin-top: 27px; font-size: 17px; line-height: 22px; color: #444; }
.supp b { color: #0f62ae; font-weight: 700; }
.arrow {
  position: absolute;
  left: 395px;
  top: 219px;
  width: 90px;
  height: 90px;
}
.note {
  position: absolute;
  color: #f00;
  font-size: 19px;
  font-weight: 500;
  line-height: 24px;
  white-space: nowrap;
}
.note-1 { left: 495px; top: 201px; letter-spacing: 3.800px; }
.note-2 { left: 562px; top: 258px; letter-spacing: 4.100px; }
.note-xy {
  font-family: "Liberation Sans", sans-serif;
  font-weight: 700;
  letter-spacing: 0;
  margin-right: 3px;
}

.rail {
  flex: 1;
  padding: 5px 0 0 41px;
  display: flex;
  flex-direction: column;
  gap: 31px;
}
.card {
  width: 254px;
  height: 105px;
  border: 1px solid #dcdcdc;
  background: #fff;
}
.card-app { display: flex; padding: 13px 0 0 15px; }
.app-text { width: 150px; }
.app-title { font-size: 19px; line-height: 30px; color: #555; white-space: nowrap; }
.app-sub { width: 112px; margin-top: 3px; font-size: 14.500px; line-height: 22px; color: #aaa; }
.qr { width: 78px; height: 78px; shape-rendering: crispEdges; }
.qr-d { fill: none; stroke: #000; stroke-width: 1; }
.ad { width: 252px; height: 103px; }
.ad-name { font-size: 35px; font-weight: 700; fill: #1d5aa6; }
.ad-url { font-size: 14px; font-weight: 700; fill: #3b6fb0; font-family: "Liberation Sans", sans-serif; }
.ad-vip { font-size: 31px; font-weight: 900; stroke-width: .7; }

.float {
  position: absolute;
  left: 1246px;
  top: 285px;
  width: 42px;
  display: flex;
  flex-direction: column;
  gap: 10px;
}
.float-top {
  width: 42px;
  height: 42px;
  background: #c2c2c2;
  display: flex;
  align-items: center;
  justify-content: center;
}
.float-top svg { width: 24px; height: 16px; }
.float-btn {
  width: 42px;
  height: 42px;
  background: #ff6600;
  color: #fff;
  font-size: 14.500px;
  line-height: 18px;
  text-align: center;
  padding-top: 1px;
}
.float-btn:nth-child(3) { margin-top: 1px; }

.vscroll {
  position: relative;
  background: #f0f0f0;
}
.arr-up {
  position: absolute;
  left: 5px;
  top: 8px;
  border: 4px solid transparent;
  border-bottom: 4px solid #505050;
  border-top: 0;
}
.arr-down {
  position: absolute;
  left: 5px;
  bottom: 5px;
  border: 4px solid transparent;
  border-top: 4px solid #505050;
  border-bottom: 0;
}
.vthumb {
  position: absolute;
  left: 2px;
  top: 201px;
  width: 14px;
  height: 135px;
  background: #c0c0c0;
}
.hscroll {
  position: relative;
  background: #f0f0f0;
  border-top: 1px solid #f0f0f0;
}
.arr-left {
  position: absolute;
  left: 4px;
  top: 4px;
  border: 4px solid transparent;
  border-right: 4px solid #a0a0a0;
  border-left: 0;
}
.hthumb {
  position: absolute;
  left: 17px;
  top: 1px;
  width: 1267px;
  height: 13px;
  background: #c0c0c0;
}
.arr-right {
  position: absolute;
  right: 4px;
  top: 4px;
  border: 4px solid transparent;
  border-left: 4px solid #505050;
  border-right: 0;
}
.corner { background: #f0f0f0; }

/* status bar */
.status {
  height: 24px;
  flex: none;
  display: flex;
  align-items: center;
  justify-content: space-between;
  background: #fff;
  border-top: 1px solid #cfcfcf;
  font-size: 12px;
  color: #555;
}
.st-left { display: flex; align-items: center; padding-left: 10px; }
.st-today { margin-left: 7px; font-size: 12px; }
.st-chev { width: 8px; height: 9px; margin-left: 29px; }
.st-news { margin-left: 7px; width: 320px; text-decoration: underline; white-space: nowrap; font-size: 12px; letter-spacing: .02px; }
.st-right { display: flex; align-items: center; padding-right: 5px; }
.st-item { display: flex; align-items: center; gap: 6px; margin-right: 12px; white-space: nowrap; color: #666; }
.st-hot { margin-right: 17px; }
.st-ic1 { margin: 0 22px 0 0; }
.st-ic2 { margin: 0 20px 0 0; }
.st-dl { margin-right: 17px; gap: 5px; }
.st-ic3 { margin-right: 22px; }
.st-ic4 { margin-right: 24px; }
.st-ic5 { margin-right: 19px; }
.st-ic6 { margin-right: 6px; }
.st-zoom { font-size: 12px; color: #666; }

/* taskbar */
.taskbar {
  height: 40px;
  flex: none;
  display: flex;
  background: #00090f;
  color: #fff;
}
.start { width: 48px; background: #000; display: flex; align-items: center; padding-left: 16px; }
.win { width: 16px; height: 16px; }
.ts-box {
  width: 344px;
  background: #333;
  display: flex;
  align-items: center;
  padding-left: 9px;
}
.cortana { width: 22px; height: 22px; }
.ts-text { margin-left: 5px; width: 281px; font-size: 14px; color: #999; white-space: nowrap; }
.mic { width: 12px; height: 20px; }
.ts-apps { display: flex; width: 551px; }
.app {
  position: relative;
  width: 49px;
  flex: none;
  height: 40px;
  display: flex;
  align-items: center;
  justify-content: center;
}
.app:first-child { margin-left: -2px; width: 50px; }
.app:nth-child(2), .app:nth-child(3), .app:nth-child(4), .app:nth-child(5) { width: 52px; }
.app-edge { margin-right: -3px; }
.app-ic { width: 24px; height: 24px; }
.app-on::after, .app-cur::after {
  content: "";
  position: absolute;
  left: 4px;
  right: 4px;
  bottom: 0;
  height: 2px;
  background: #76b9ed;
}
.app-cur { background: #3a4044; }
.app-cur::after { left: 0; right: 0; }
.tray { flex: 1; display: flex; align-items: center; font-size: 13px; color: #eee; padding-left: 83px; }
.tray-link { font-size: 12px; margin-right: 8px; white-space: nowrap; }
.tray-ic { width: 16px; height: 16px; margin-right: 9px; }
.tray-wifi { margin-right: 5px; }
.tray-kb { width: 24px; height: 16px; margin: 0 9px 0 0; }
.tray-ime { font-size: 14px; margin: 0 12px 0 0; }
.clock {
  width: 62px;
  margin-left: 8px;
  display: flex;
  flex-direction: column;
  align-items: center;
  font-size: 13px;
  line-height: 19px;
  white-space: nowrap;
}
.tray-note { width: 16px; height: 16px; margin-left: 17px; }
```
